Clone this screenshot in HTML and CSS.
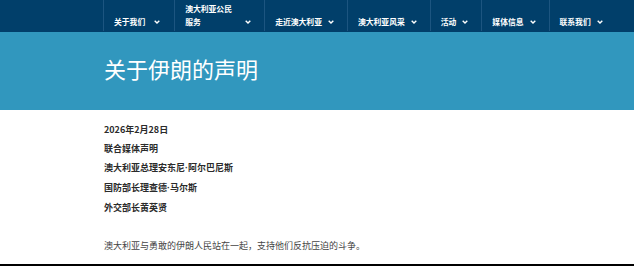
FILE: index.html
```html
<!DOCTYPE html>
<html lang="zh-CN">
<head>
    <meta charset="UTF-8">
    <meta name="viewport" content="width=device-width, initial-scale=1.0">
    <title>关于伊朗的声明</title>
    <link rel="stylesheet" href="styles.css">
</head>
<body>
<header class="topnav">
    <ul class="menu">
        <li class="menu-item menu-first"><span class="label">关于我们</span><span class="caret"><svg width="6" height="4" viewBox="0 0 6 4"><polyline points="0.7,0.7 3,3 5.3,0.7"/></svg></span></li>
        <li class="menu-item"><span class="label label-wide">澳大利亚公民<br>服务</span><span class="caret"><svg width="6" height="4" viewBox="0 0 6 4"><polyline points="0.7,0.7 3,3 5.3,0.7"/></svg></span></li>
        <li class="menu-item"><span class="label">走近澳大利亚</span><span class="caret"><svg width="6" height="4" viewBox="0 0 6 4"><polyline points="0.7,0.7 3,3 5.3,0.7"/></svg></span></li>
        <li class="menu-item"><span class="label">澳大利亚风采</span><span class="caret"><svg width="6" height="4" viewBox="0 0 6 4"><polyline points="0.7,0.7 3,3 5.3,0.7"/></svg></span></li>
        <li class="menu-item"><span class="label">活动</span><span class="caret"><svg width="6" height="4" viewBox="0 0 6 4"><polyline points="0.7,0.7 3,3 5.3,0.7"/></svg></span></li>
        <li class="menu-item"><span class="label">媒体信息</span><span class="caret"><svg width="6" height="4" viewBox="0 0 6 4"><polyline points="0.7,0.7 3,3 5.3,0.7"/></svg></span></li>
        <li class="menu-item"><span class="label">联系我们</span><span class="caret"><svg width="6" height="4" viewBox="0 0 6 4"><polyline points="0.7,0.7 3,3 5.3,0.7"/></svg></span></li>
    </ul>
</header>

<div class="banner">
    <h1 class="page-title">关于伊朗的声明</h1>
</div>

<main class="content">
    <p class="meta">2026年2月28日</p>
    <p class="meta">联合媒体声明</p>
    <p class="meta">澳大利亚总理安东尼<span class="dot">·</span>阿尔巴尼斯</p>
    <p class="meta">国防部长理查德<span class="dot">·</span>马尔斯</p>
    <p class="meta">外交部长黄英贤</p>
    <p class="body-text">澳大利亚与勇敢的伊朗人民站在一起，支持他们反抗压迫的斗争。</p>
</main>

<div class="bottom-rule"></div>
</body>
</html>
```

FILE: styles.css
```css
/* page */
body {
    font-family: "Noto Sans CJK SC", "Noto Sans", sans-serif;
    margin: 0;
    background-color: #fff;
    height: 266px;
    overflow: hidden;
    display: flex;
    flex-direction: column;
}

/* top navigation */
.topnav {
    background-color: #013f6a;
    height: 32px;
}
.menu {
    list-style: none;
    margin: 0;
    padding: 0 0 0 103px;
    display: flex;
    height: 31px;
}
.menu-item {
    display: flex;
    align-items: flex-end;
    gap: 6px;
    padding: 0 13px 3px 10px;
    border-left: 1px solid #1c5580;
    color: #fff;
    font-size: 7.8px;
    font-weight: bold;
    line-height: 13px;
}
.menu-first {
    gap: 9px;
    padding-right: 14px;
}
.label-wide {
    width: 54px;
}
.caret {
    display: flex;
    align-items: center;
    height: 13px;
}
.caret svg {
    display: block;
}
.caret polyline {
    fill: none;
    stroke: #fff;
    stroke-width: 1.4;
}

/* title band */
.banner {
    background-color: #3197be;
    padding: 25px 0 31px 104px;
}
.page-title {
    margin: 0;
    color: #fff;
    font-size: 22px;
    font-weight: normal;
    line-height: 22px;
}

/* article */
.content {
    flex: 1;
    padding: 10px 0 0 104px;
}
.content p {
    margin: 0;
    font-size: 9px;
    line-height: 19px;
}
.meta {
    font-weight: bold;
    color: #2b2b2b;
}
.dot {
    font-family: "Liberation Sans", sans-serif;
}
.body-text {
    margin-top: 19px !important;
    color: #444;
}

.bottom-rule {
    height: 2px;
    background-color: #000;
}
```
